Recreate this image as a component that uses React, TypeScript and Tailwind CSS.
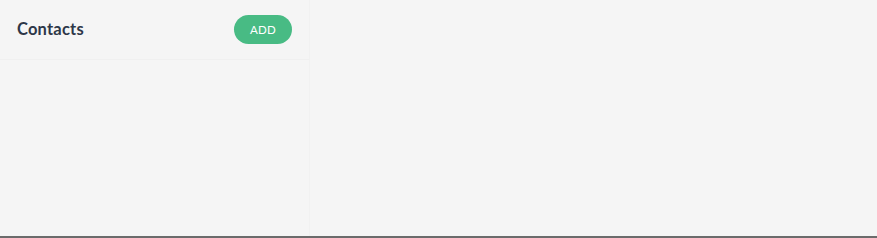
export default function App() {
  return (
    <div className="flex h-[238px] w-full flex-col bg-[#f5f5f5] font-['Lato',sans-serif]">
      <div className="flex flex-1 min-h-0">
        <aside className="w-[310px] border-r border-[#f1f1f1]">
          <header className="flex h-[60px] items-center justify-between border-b border-[#f0f0f0] pl-[17px] pr-[17px]">
            <h1 className="text-[16.5px] font-bold tracking-[0.2px] text-[#2d3748]">Contacts</h1>
            <button
              type="button"
              className="h-[29px] w-[58px] rounded-full bg-[#48bb84] text-[11.5px] font-normal tracking-[0.3px] text-white"
            >
              ADD
            </button>
          </header>
        </aside>
        <main className="flex-1" />
      </div>
      <div className="h-[2px] bg-[#6b6b6b]" />
    </div>
  );
}
